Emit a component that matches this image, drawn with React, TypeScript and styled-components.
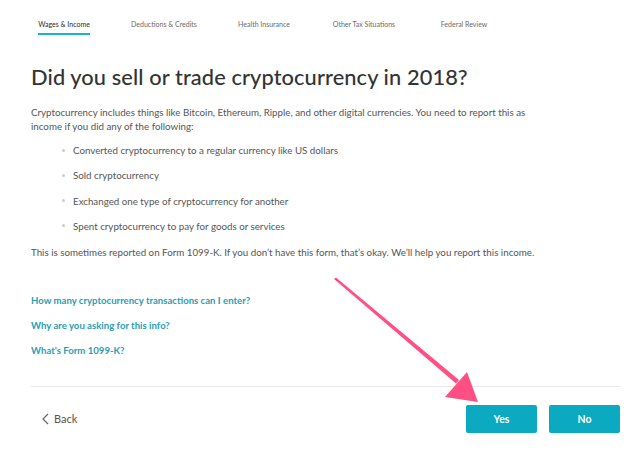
import * as React from "react"
import styled, { createGlobalStyle } from "styled-components"

const GlobalStyle = createGlobalStyle`
  body {
    margin: 0;
    background: #fff;
    font-family: Lato, "Noto Sans", sans-serif;
  }
`

const Page = styled.div`
  position: relative;
  width: 644px;
  height: 455px;
  overflow: hidden;
  background: #fff;
`

const Tabs = styled.nav`
  display: grid;
  grid-template-columns: repeat(5, 100px);
  padding: 17px 0 0 14px;
  height: 19px;
`

const Tab = styled.div<{ $active?: boolean }>`
  justify-self: center;
  font-size: 7px;
  line-height: 14px;
  height: 16px;
  color: ${p => (p.$active ? "#2b2b2b" : "#6a6a6a")};
  border-bottom: 2px solid ${p => (p.$active ? "#1bb3c9" : "transparent")};
`

const Content = styled.main`
  padding: 0 24px 0 31px;
`

const Title = styled.h1`
  margin: 26px 0 0;
  font-size: 21.8px;
  line-height: 30px;
  font-weight: 500;
  color: #333;
  letter-spacing: 0.1px;
`

const Text = styled.p`
  margin: 0;
  font-size: 9.75px;
  line-height: 14px;
  color: #555;
`

const Intro = styled(Text)`
  margin-top: 13px;
  max-width: 515px;
`

const List = styled.ul`
  list-style: none;
  margin: 10px 0 0;
  padding: 0 0 0 31px;
  display: flex;
  flex-direction: column;
  gap: 11.3px;
`

const Item = styled.li`
  font-size: 9.75px;
  line-height: 14px;
  color: #555;
  display: flex;
  align-items: center;
  gap: 8px;
  &::before {
    content: "";
    width: 3px;
    height: 3px;
    border-radius: 50%;
    background: #ccc;
  }
`

const Note = styled(Text)`
  margin-top: 12px;
`

const Links = styled.div`
  margin-top: 35px;
  display: flex;
  flex-direction: column;
  gap: 11px;
`

const HelpLink = styled.a`
  font-size: 9.6px;
  line-height: 14px;
  font-weight: 700;
  color: #2c9db3;
  text-decoration: none;
`

const Divider = styled.hr`
  margin: 28px 0 0;
  border: none;
  border-top: 1px solid #e7e7e7;
`

const Footer = styled.div`
  display: flex;
  align-items: center;
  padding: 18px 0 0 11px;
`

const BackButton = styled.button`
  display: flex;
  align-items: center;
  gap: 5px;
  border: none;
  background: none;
  padding: 0;
  font-family: inherit;
  font-size: 11px;
  color: #555;
  margin-right: auto;
`

const Choice = styled.button`
  width: 71px;
  height: 28px;
  margin-left: 12px;
  border: none;
  border-radius: 2px;
  background: #0caac1;
  color: #fff;
  font-family: inherit;
  font-size: 10.5px;
  font-weight: 700;
`

const Arrow = styled.svg`
  position: absolute;
  left: 0;
  top: 0;
  pointer-events: none;
`

const tabs = ["Wages & Income", "Deductions & Credits", "Health Insurance", "Other Tax Situations", "Federal Review"]

const bullets = [
  "Converted cryptocurrency to a regular currency like US dollars",
  "Sold cryptocurrency",
  "Exchanged one type of cryptocurrency for another",
  "Spent cryptocurrency to pay for goods or services",
]

const links = [
  "How many cryptocurrency transactions can I enter?",
  "Why are you asking for this info?",
  "What's Form 1099-K?",
]

export default function App() {
  return (
    <Page>
      <GlobalStyle />
      <Tabs>
        {tabs.map((t, i) => (
          <Tab key={t} $active={i === 0}>{t}</Tab>
        ))}
      </Tabs>
      <Content>
        <Title>Did you sell or trade cryptocurrency in 2018?</Title>
        <Intro>
          Cryptocurrency includes things like Bitcoin, Ethereum, Ripple, and other digital currencies. You need to report this as
          income if you did any of the following:
        </Intro>
        <List>
          {bullets.map(b => (
            <Item key={b}>{b}</Item>
          ))}
        </List>
        <Note>This is sometimes reported on Form 1099-K. If you don’t have this form, that’s okay. We’ll help you report this income.</Note>
        <Links>
          {links.map(l => (
            <HelpLink key={l} href="#">{l}</HelpLink>
          ))}
        </Links>
        <Divider />
        <Footer>
          <BackButton>
            <svg width="7" height="12" viewBox="0 0 7 12">
              <path d="M6 1 L1 6 L6 11" fill="none" stroke="#666" strokeWidth="1.2" />
            </svg>
            Back
          </BackButton>
          <Choice>Yes</Choice>
          <Choice>No</Choice>
        </Footer>
      </Content>
      <Arrow width="644" height="455" viewBox="0 0 644 455">
        <path d="M334 279 L336 277.5 L459 380 L456 383.5 Z" fill="#ff4f84" />
        <path d="M445 397 L467 372 L478 402 Z" fill="#ff4f84" />
      </Arrow>
    </Page>
  )
}
